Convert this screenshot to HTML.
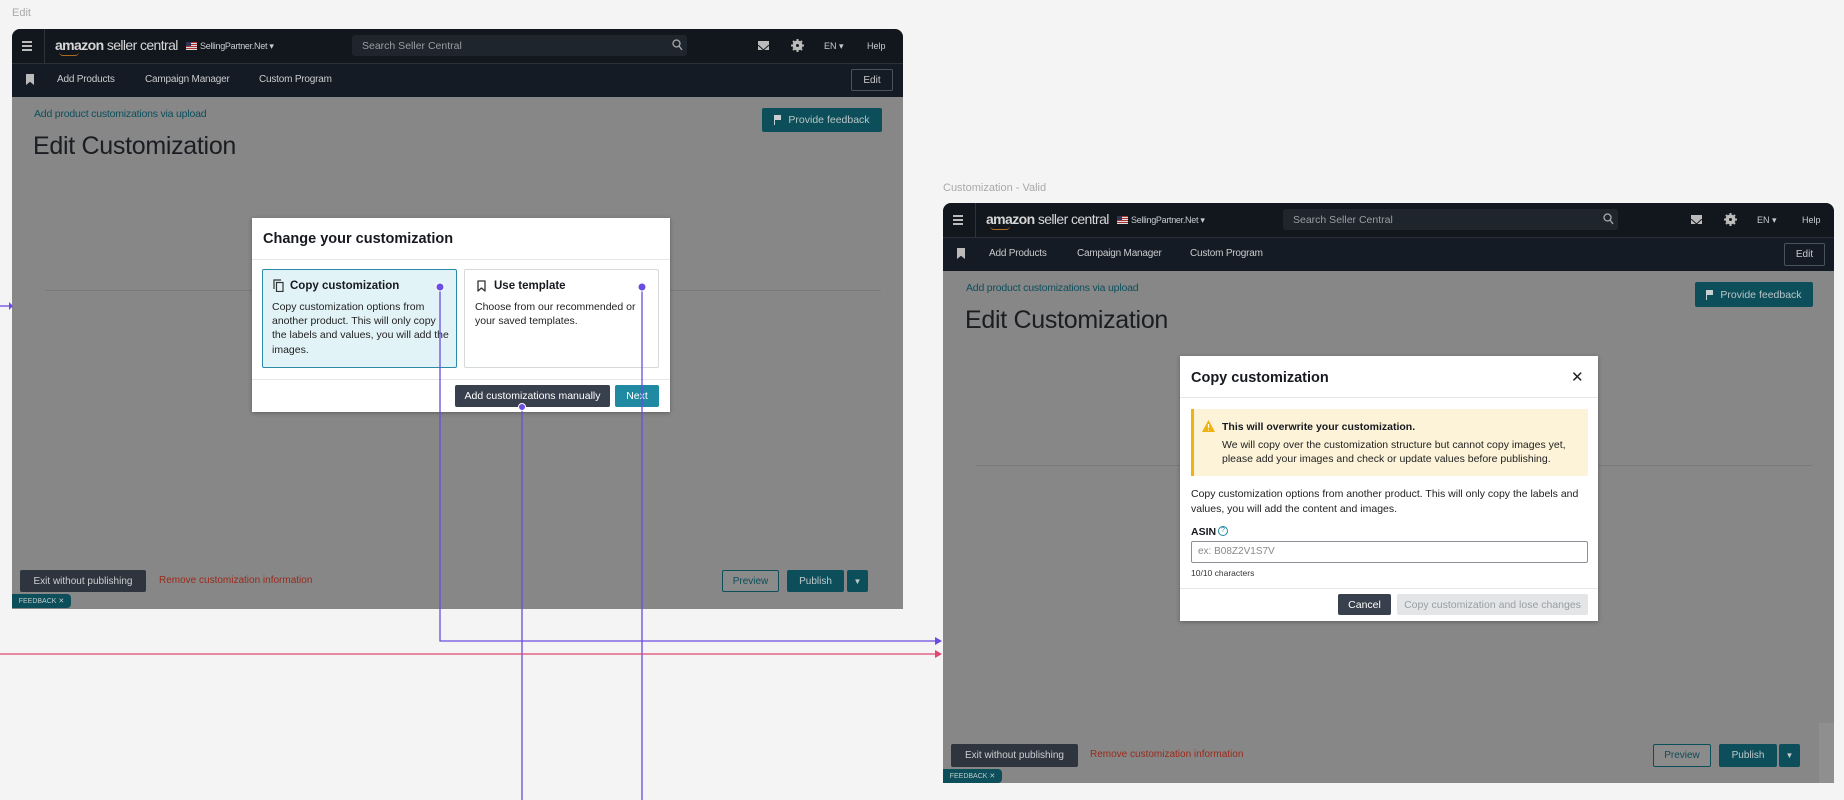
<!DOCTYPE html>
<html><head><meta charset="utf-8">
<style>
*{box-sizing:border-box;margin:0;padding:0}
body{width:1844px;height:800px;background:#f4f4f4;position:relative;overflow:hidden;font-family:"Liberation Sans",sans-serif}
.a{position:absolute}
.lbl{font-size:11px;color:#a9a9a9}
.frame{position:absolute;width:891px;height:580px;background:#878787;border-radius:8px 8px 0 0;overflow:hidden}
.top{left:0;top:0;width:891px;height:34px;background:#12171e}
.nav{left:0;top:34px;width:891px;height:34px;background:#151b24;border-top:1px solid #2a313a}
.w{color:#c9cbcd;font-size:10px;white-space:nowrap}
.btn{display:flex;align-items:center;justify-content:center;font-size:10px;white-space:nowrap;border-radius:2px}
.modal{position:absolute;background:#fff;box-shadow:0 1px 4px rgba(0,0,0,.3)}
.t{font-size:11px;color:#222;white-space:nowrap}
.nl{font-size:10px;letter-spacing:-.2px;top:45px}
</style></head><body>

<div class="a lbl" style="left:12px;top:7px">Edit</div>
<div class="a lbl" style="left:943px;top:182px">Customization - Valid</div>

<div class="frame" style="left:12px;top:29px">
 <div class="a top"></div>
 <div class="a nav"></div>
 <div class="a" style="left:10px;top:12px;width:10px;height:2px;background:#bbb;box-shadow:0 4px #bbb,0 8px #bbb"></div>
 <div class="a" style="left:32px;top:0;width:1px;height:34px;background:#2c333c"></div>
 <div class="a" style="left:43px;top:8px;color:#d6d6d6;font-size:14px;letter-spacing:-.6px;white-space:nowrap"><b>amazon</b> seller central</div>
 <div class="a" style="left:47px;top:23px;width:20px;height:4px;border-bottom:1.5px solid #b06a1e;border-radius:0 0 10px 10px"></div>
 <div class="a" style="left:174px;top:13px;width:11px;height:8px;background:repeating-linear-gradient(#a33 0 1px,#ddd 1px 2px)"><div style="width:5px;height:4px;background:#335"></div></div>
 <div class="a w" style="left:188px;top:12px;font-size:9px;letter-spacing:-.3px">SellingPartner.Net ▾</div>
 <div class="a" style="left:340px;top:6px;width:335px;height:21px;background:#1f252d;border-radius:3px"></div>
 <div class="a w" style="left:350px;top:11px;font-size:10.5px;color:#9a9ea3">Search Seller Central</div>
 <svg class="a" style="left:660px;top:10px" width="11" height="12" viewBox="0 0 11 12"><circle cx="4.5" cy="4.5" r="3.5" fill="none" stroke="#aaa" stroke-width="1.3"/><path d="M7 7l3 4" stroke="#aaa" stroke-width="1.3"/></svg>
 <div class="a" style="left:746px;top:12px;width:11px;height:9px;background:#bbb"><svg width="11" height="9"><path d="M0 0l5.5 5 5.5-5" stroke="#12171e" fill="none"/></svg></div>
 <svg class="a" style="left:779px;top:10px" width="13" height="13" viewBox="0 0 13 13"><circle cx="6.5" cy="6.5" r="3.5" fill="none" stroke="#bbb" stroke-width="3"/><path d="M6.5 0v13M0 6.5h13M2 2l9 9M11 2l-9 9" stroke="#bbb" stroke-width="2"/><circle cx="6.5" cy="6.5" r="1.5" fill="#12171e"/></svg>
 <div class="a w" style="left:812px;top:12px;font-size:9px">EN ▾</div>
 <div class="a w" style="left:855px;top:12px;font-size:9px">Help</div>
 <div class="a" style="left:14px;top:45px;width:8px;height:11px;background:#bbb;clip-path:polygon(0 0,100% 0,100% 100%,50% 70%,0 100%)"></div>
 <div class="a w nl" style="left:45px">Add Products</div>
 <div class="a w nl" style="left:133px">Campaign Manager</div>
 <div class="a w nl" style="left:247px">Custom Program</div>
 <div class="a btn" style="left:839px;top:40px;width:42px;height:22px;border:1px solid #4a525c;color:#c9cbcd">Edit</div>
 <div class="a" style="left:22px;top:79px;font-size:10.5px;color:#0b4f5c;white-space:nowrap;letter-spacing:-.2px">Add product customizations via upload</div>
 <div class="a" style="left:21px;top:103px;font-size:25px;color:#1a1d21;white-space:nowrap;letter-spacing:-.3px">Edit Customization</div>
 <div class="a btn" style="left:750px;top:79px;width:120px;height:24px;background:#0c4e59;color:#b9c6c8;font-size:10.5px"><span style="display:inline-block;width:7px;height:10px;border-left:1.5px solid #c8d0d2;margin-right:7px;position:relative"><span style="position:absolute;left:0;top:0;width:6px;height:5px;background:#c8d0d2"></span></span>Provide feedback</div>
 <div class="a" style="left:33px;top:261px;width:836px;height:1px;background:#7a7a7a"></div>
 <div class="a btn" style="left:8px;top:541px;width:126px;height:22px;background:#2f353e;color:#cdd0d3">Exit without publishing</div>
 <div class="a" style="left:147px;top:546px;font-size:10px;color:#9b2a1a;white-space:nowrap">Remove customization information</div>
 <div class="a btn" style="left:710px;top:541px;width:57px;height:22px;border:1px solid #0c4e59;color:#0c4e59;background:#8b8b8b">Preview</div>
 <div class="a btn" style="left:775px;top:541px;width:57px;height:22px;background:#0c4e59;color:#c0cacc">Publish</div>
 <div class="a btn" style="left:835px;top:541px;width:21px;height:22px;background:#0c4e59;color:#c0cacc;font-size:8px">▼</div>
 <div class="a btn" style="left:0;top:565px;width:59px;height:14px;background:#0c4e59;color:#c0cacc;font-size:7px;border-radius:0 4px 4px 0">FEEDBACK ✕</div>
</div>

<div class="frame" style="left:943px;top:203px">
 <div class="a top"></div>
 <div class="a nav"></div>
 <div class="a" style="left:10px;top:12px;width:10px;height:2px;background:#bbb;box-shadow:0 4px #bbb,0 8px #bbb"></div>
 <div class="a" style="left:32px;top:0;width:1px;height:34px;background:#2c333c"></div>
 <div class="a" style="left:43px;top:8px;color:#d6d6d6;font-size:14px;letter-spacing:-.6px;white-space:nowrap"><b>amazon</b> seller central</div>
 <div class="a" style="left:47px;top:23px;width:20px;height:4px;border-bottom:1.5px solid #b06a1e;border-radius:0 0 10px 10px"></div>
 <div class="a" style="left:174px;top:13px;width:11px;height:8px;background:repeating-linear-gradient(#a33 0 1px,#ddd 1px 2px)"><div style="width:5px;height:4px;background:#335"></div></div>
 <div class="a w" style="left:188px;top:12px;font-size:9px;letter-spacing:-.3px">SellingPartner.Net ▾</div>
 <div class="a" style="left:340px;top:6px;width:335px;height:21px;background:#1f252d;border-radius:3px"></div>
 <div class="a w" style="left:350px;top:11px;font-size:10.5px;color:#9a9ea3">Search Seller Central</div>
 <svg class="a" style="left:660px;top:10px" width="11" height="12" viewBox="0 0 11 12"><circle cx="4.5" cy="4.5" r="3.5" fill="none" stroke="#aaa" stroke-width="1.3"/><path d="M7 7l3 4" stroke="#aaa" stroke-width="1.3"/></svg>
 <div class="a" style="left:748px;top:12px;width:11px;height:9px;background:#bbb"><svg width="11" height="9"><path d="M0 0l5.5 5 5.5-5" stroke="#12171e" fill="none"/></svg></div>
 <svg class="a" style="left:781px;top:10px" width="13" height="13" viewBox="0 0 13 13"><circle cx="6.5" cy="6.5" r="3.5" fill="none" stroke="#bbb" stroke-width="3"/><path d="M6.5 0v13M0 6.5h13M2 2l9 9M11 2l-9 9" stroke="#bbb" stroke-width="2"/><circle cx="6.5" cy="6.5" r="1.5" fill="#12171e"/></svg>
 <div class="a w" style="left:814px;top:12px;font-size:9px">EN ▾</div>
 <div class="a w" style="left:859px;top:12px;font-size:9px">Help</div>
 <div class="a" style="left:14px;top:45px;width:8px;height:11px;background:#bbb;clip-path:polygon(0 0,100% 0,100% 100%,50% 70%,0 100%)"></div>
 <div class="a w nl" style="left:46px">Add Products</div>
 <div class="a w nl" style="left:134px">Campaign Manager</div>
 <div class="a w nl" style="left:247px">Custom Program</div>
 <div class="a btn" style="left:841px;top:40px;width:41px;height:23px;border:1px solid #4a525c;color:#c9cbcd">Edit</div>
 <div class="a" style="left:23px;top:79px;font-size:10.5px;color:#0b4f5c;white-space:nowrap;letter-spacing:-.2px">Add product customizations via upload</div>
 <div class="a" style="left:22px;top:103px;font-size:25px;color:#1a1d21;white-space:nowrap;letter-spacing:-.3px">Edit Customization</div>
 <div class="a btn" style="left:752px;top:79px;width:118px;height:25px;background:#0c4e59;color:#b9c6c8;font-size:10.5px"><span style="display:inline-block;width:7px;height:10px;border-left:1.5px solid #c8d0d2;margin-right:7px;position:relative"><span style="position:absolute;left:0;top:0;width:6px;height:5px;background:#c8d0d2"></span></span>Provide feedback</div>
 <div class="a" style="left:33px;top:262px;width:836px;height:1px;background:#7a7a7a"></div>
 <div class="a btn" style="left:8px;top:541px;width:127px;height:23px;background:#2f353e;color:#cdd0d3">Exit without publishing</div>
 <div class="a" style="left:147px;top:546px;font-size:10px;color:#9b2a1a;white-space:nowrap">Remove customization information</div>
 <div class="a btn" style="left:710px;top:541px;width:58px;height:23px;border:1px solid #0c4e59;color:#0c4e59;background:#8b8b8b">Preview</div>
 <div class="a btn" style="left:776px;top:541px;width:58px;height:23px;background:#0c4e59;color:#c0cacc">Publish</div>
 <div class="a btn" style="left:836px;top:541px;width:21px;height:23px;background:#0c4e59;color:#c0cacc;font-size:8px">▼</div>
 <div class="a" style="left:876px;top:520px;width:15px;height:60px;background:#8f8f8f"></div>
 <div class="a btn" style="left:0;top:566px;width:59px;height:14px;background:#0c4e59;color:#c0cacc;font-size:7px;border-radius:0 4px 4px 0">FEEDBACK ✕</div>
</div>

<div class="modal" style="left:252px;top:218px;width:418px;height:194px">
 <div class="a" style="left:11px;top:13px;font-size:14.5px;font-weight:bold;color:#16191f;white-space:nowrap">Change your customization</div>
 <div class="a" style="left:0;top:41px;width:418px;height:1px;background:#e4e6e8"></div>
 <div class="a" style="left:10px;top:51px;width:195px;height:99px;background:#e2f3f8;border:1px solid #2a8ca6;border-radius:2px"></div>
 <div class="a" style="left:212px;top:51px;width:195px;height:99px;border:1px solid #d5d9d9;border-radius:2px"></div>
 <svg class="a" style="left:21px;top:61px" width="11" height="13" viewBox="0 0 11 13"><path d="M1 10V1h7" fill="none" stroke="#333" stroke-width="1.2"/><rect x="3.5" y="3.5" width="6.5" height="9" fill="none" stroke="#333" stroke-width="1.2"/></svg>
 <div class="a" style="left:38px;top:62px;font-size:11.5px;font-weight:bold;color:#16191f;white-space:nowrap">Copy customization</div>
 <div class="a t" style="left:20px;top:82px;line-height:14.2px;font-size:10.5px">Copy customization options from<br>another product. This will only copy<br>the labels and values, you will add the<br>images.</div>
 <svg class="a" style="left:225px;top:62px" width="9" height="12" viewBox="0 0 9 12"><path d="M1 1h7v10L4.5 8 1 11z" fill="none" stroke="#333" stroke-width="1.3" stroke-linejoin="round"/></svg>
 <div class="a" style="left:242px;top:62px;font-size:11.5px;font-weight:bold;color:#16191f;white-space:nowrap">Use template</div>
 <div class="a t" style="left:223px;top:82px;line-height:14.2px;font-size:10.5px">Choose from our recommended or<br>your saved templates.</div>
 <div class="a" style="left:0;top:161px;width:418px;height:1px;background:#e4e6e8"></div>
 <div class="a btn" style="left:203px;top:167px;width:155px;height:22px;background:#37404c;color:#fff;font-size:10.5px">Add customizations manually</div>
 <div class="a btn" style="left:363px;top:167px;width:44px;height:22px;background:#1f8aa1;color:#fff;font-size:10.5px">Next</div>
</div>

<div class="modal" style="left:1180px;top:356px;width:418px;height:265px">
 <div class="a" style="left:11px;top:14px;font-size:14.5px;font-weight:bold;color:#16191f;white-space:nowrap">Copy customization</div>
 <div class="a" style="left:391px;top:12px;font-size:15px;color:#222">✕</div>
 <div class="a" style="left:0;top:41px;width:418px;height:1px;background:#e4e6e8"></div>
 <div class="a" style="left:11px;top:53px;width:397px;height:67px;background:#fcf3d8;border-left:3px solid #f0b20e"></div>
 <svg class="a" style="left:22px;top:64px" width="13" height="12" viewBox="0 0 13 12"><path d="M6.5 0L13 12H0z" fill="#f0b20e"/><path d="M6.5 4v4M6.5 9.5v1" stroke="#fff" stroke-width="1.2"/></svg>
 <div class="a" style="left:42px;top:65px;font-size:10.5px;font-weight:bold;color:#16191f;white-space:nowrap">This will overwrite your customization.</div>
 <div class="a t" style="left:42px;top:82px;line-height:14px;font-size:10.5px">We will copy over the customization structure but cannot copy images yet,<br>please add your images and check or update values before publishing.</div>
 <div class="a t" style="left:11px;top:131px;line-height:14.5px;font-size:10.5px">Copy customization options from another product. This will only copy the labels and<br>values, you will add the content and images.</div>
 <div class="a" style="left:11px;top:170px;font-size:10.5px;font-weight:bold;color:#16191f">ASIN</div>
 <div class="a" style="left:38px;top:170px;width:10px;height:10px;border:1px solid #1f8aa1;border-radius:50%;color:#1f8aa1;font-size:7px;text-align:center;line-height:8px">?</div>
 <div class="a" style="left:11px;top:185px;width:397px;height:22px;border:1px solid #8d9096;border-radius:2px"></div>
 <div class="a" style="left:18px;top:190px;font-size:10px;color:#888">ex: B08Z2V1S7V</div>
 <div class="a" style="left:11px;top:212px;font-size:8.5px;color:#333">10/10 characters</div>
 <div class="a" style="left:0;top:232px;width:418px;height:1px;background:#e4e6e8"></div>
 <div class="a btn" style="left:158px;top:238px;width:53px;height:21px;background:#37404c;color:#fff;font-size:10.5px">Cancel</div>
 <div class="a btn" style="left:217px;top:238px;width:191px;height:21px;background:#e3e5e6;color:#9a9ea3;font-size:10.5px">Copy customization and lose changes</div>
</div>

<svg class="a" style="left:0;top:0" width="1844" height="800">
 <g stroke="#6a4ce0" stroke-width="1.3" fill="none">
  <path d="M0 306H10"/>
  <path d="M440 287V641H938"/>
  <path d="M642 287V800"/>
  <path d="M522 407V800"/>
 </g>
 <path d="M0 654H938" stroke="#e04670" stroke-width="1.3"/>
 <path d="M9 302l4 4-4 4z" fill="#6a4ce0"/>
 <path d="M935 637l7 4-7 4z" fill="#6a4ce0"/>
 <path d="M935 650l7 4-7 4z" fill="#e04670"/>
 <g fill="#6a4ce0" stroke="#fff" stroke-width="1"><circle cx="440" cy="287" r="4"/><circle cx="642" cy="287" r="4"/><circle cx="522" cy="407" r="3.5"/></g>
</svg>
</body></html>
